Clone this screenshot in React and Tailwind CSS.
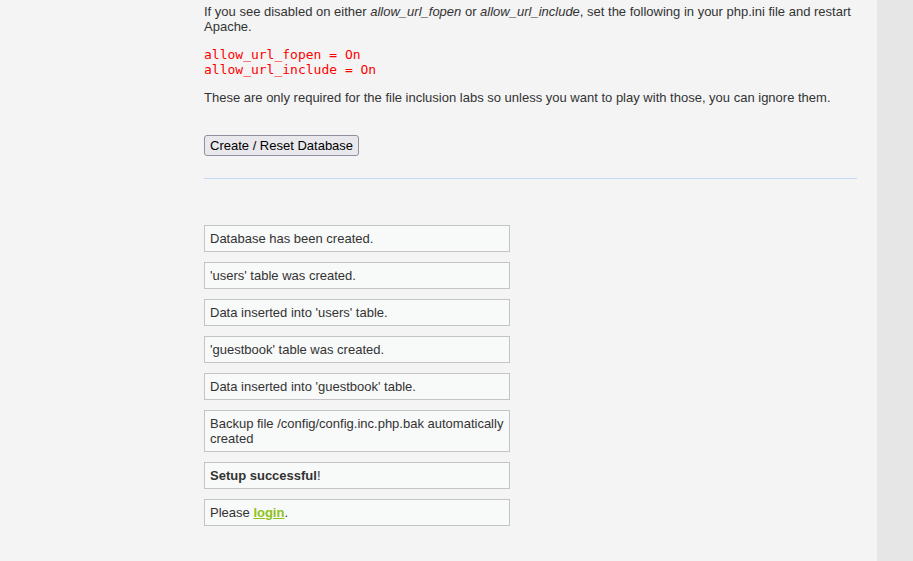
export default function App() {
  const msgs = [
    'Database has been created.',
    "'users' table was created.",
    "Data inserted into 'users' table.",
    "'guestbook' table was created.",
    "Data inserted into 'guestbook' table.",
    'Backup file /config/config.inc.php.bak automatically created',
  ];

  return (
    <div className="flex h-[561px] w-[913px] overflow-hidden bg-[#f4f4f4] font-['Liberation_Sans',Arial,sans-serif] text-[13px] leading-[15px] text-[#333]">
      <div className="w-[204px] shrink-0" />
      <div className="w-[653px] shrink-0 pt-[4px]">
        <p>
          If you see disabled on either <em>allow_url_fopen</em> or <em>allow_url_include</em>, set the following in your php.ini file and restart Apache.
        </p>
        <pre className="mt-[13px] font-['DejaVu_Sans_Mono',monospace] text-[13px] leading-[15px] text-[#f00]">
          {'allow_url_fopen = On\nallow_url_include = On'}
        </pre>
        <p className="mt-[13px]">
          These are only required for the file inclusion labs so unless you want to play with those, you can ignore them.
        </p>
        <button className="mt-[30px] h-[21px] rounded-[3px] border border-[#8f8f9d] bg-[#e9e9ed] px-[5px] text-[13px] leading-[15px] text-black">
          Create / Reset Database
        </button>
        <div className="mt-[22px] h-px bg-[#c5d9f7]" />
        <div className="mt-[46px] flex w-[306px] flex-col gap-[10px]">
          {msgs.map((m) => (
            <div key={m} className="border border-[#c4c4c4] bg-[#f8f9f9] px-[5px] py-[5px]">
              {m}
            </div>
          ))}
          <div className="border border-[#c4c4c4] bg-[#f8f9f9] px-[5px] py-[5px]">
            <strong>Setup successful</strong>!
          </div>
          <div className="border border-[#c4c4c4] bg-[#f8f9f9] px-[5px] py-[5px]">
            Please <a href="#" className="font-bold text-[#8cc31a] underline">login</a>.
          </div>
        </div>
      </div>
      <div className="flex-1" />
      <div className="w-[36px] shrink-0 bg-[#e6e6e6]" />
    </div>
  );
}
